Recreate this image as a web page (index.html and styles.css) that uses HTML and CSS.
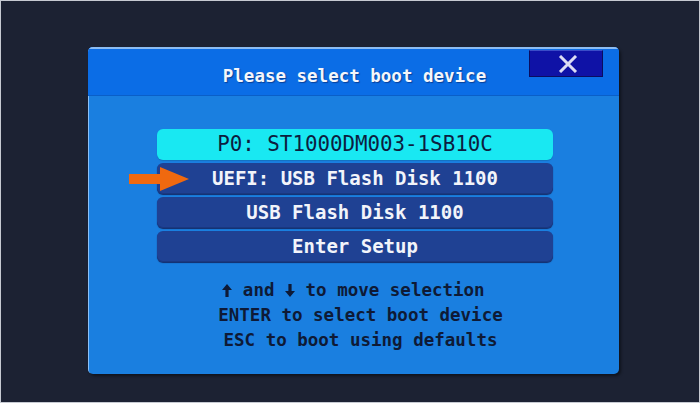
FILE: index.html
```html
<!DOCTYPE html>
<html>
<head>
<meta charset="utf-8">
<link rel="stylesheet" href="styles.css">
</head>
<body>
<div class="screen">
  <div class="panel">
    <div class="titlebar">
      <span class="title">Please select boot device</span>
      <div class="close">
        <svg width="22" height="18" viewBox="0 0 22 18"><path d="M3 1 L19 17 M19 1 L3 17" stroke="#dcdcf4" stroke-width="3" stroke-linecap="butt"/></svg>
      </div>
    </div>
    <div class="body">
      <div class="menu">
        <div class="item selected">P0: ST1000DM003-1SB10C</div>
        <div class="item">UEFI: USB Flash Disk 1100
          <svg class="pointer" width="60" height="24" viewBox="0 0 60 24"><path d="M0 7 H31 V0 L60 12 L31 24 V17 H0 Z" fill="#f0690f"/></svg>
        </div>
        <div class="item">USB Flash Disk 1100</div>
        <div class="item">Enter Setup</div>
      </div>
      <div class="help">
        <div class="keys"><svg class="key" width="10" height="13" viewBox="0 0 10 13"><path d="M5 0 L10 6 H6.6 V13 H3.4 V6 H0 Z" fill="#0e1a36"/></svg> and <svg class="key" width="10" height="13" viewBox="0 0 10 13"><path d="M5 13 L10 7 H6.6 V0 H3.4 V7 H0 Z" fill="#0e1a36"/></svg> to move selection</div>
        <div>ENTER to select boot device</div>
        <div>ESC to boot using defaults</div>
      </div>
    </div>
  </div>
</div>
</body>
</html>
```
FILE: styles.css
```css
html, body {
  margin: 0;
  padding: 0;
}
body {
  width: 700px;
  height: 403px;
  overflow: hidden;
  background: #1c2233;
  font-family: "DejaVu Sans Mono", "Liberation Mono", monospace;
}
.screen {
  box-sizing: border-box;
  width: 700px;
  height: 403px;
  border: 1px solid #c6cad2;
  padding: 46px 0 0 87px;
}
.panel {
  width: 531px;
  height: 327px;
  border-radius: 5px;
  overflow: hidden;
  background: #1a7fe0;
  box-shadow: 2px 2px 3px rgba(0, 0, 0, 0.45), inset 1px 1px 0 rgba(190, 220, 255, 0.7);
  display: flex;
  flex-direction: column;
}
.titlebar {
  position: relative;
  height: 49px;
  flex: none;
  background: #0b6de6;
  border-top: 2px solid #8cbcf2;
  box-sizing: border-box;
  border-bottom: 1px solid #0a5fc8;
  display: flex;
  justify-content: center;
  padding-top: 16px;
}
.title {
  color: #f4f6fb;
  font-weight: bold;
  font-size: 17.5px;
  line-height: 22px;
  padding-left: 2px;
  text-shadow: 1px 1px 1px rgba(0, 20, 80, 0.5);
}
.close {
  position: absolute;
  top: 1px;
  right: 16px;
  width: 74px;
  height: 27px;
  box-sizing: border-box;
  background: #0f12a6;
  border: 1px solid #0a0c60;
  border-top-color: #3a4cc8;
  display: flex;
  justify-content: center;
  align-items: center;
  padding-left: 4px;
}
.body {
  flex: 1;
  display: flex;
  flex-direction: column;
  align-items: center;
  padding-top: 33px;
}
.menu {
  width: 396px;
  margin-left: 3px;
  display: flex;
  flex-direction: column;
  gap: 3px;
}
.item {
  position: relative;
  height: 31px;
  border-radius: 6px;
  background: #1f4193;
  box-shadow: 0 1px 1px #132c6a, inset 0 -1px 0 #1a3880;
  color: #f2f4fa;
  font-weight: bold;
  font-size: 19px;
  line-height: 31px;
  text-align: center;
}
.item.selected {
  background: #19e8f2;
  color: #0c1d40;
  font-weight: normal;
  font-size: 20.8px;
  box-shadow: 0 1px 1px #1472c0;
}
.pointer {
  position: absolute;
  left: -28px;
  top: 4px;
}
.help {
  margin-top: 16px;
  margin-left: 14px;
  color: #0e1a36;
  font-weight: bold;
  font-size: 17.5px;
  line-height: 25px;
  text-align: center;
}
.keys {
  margin-right: 14px;
}
.key {
  vertical-align: -1px;
}
```
